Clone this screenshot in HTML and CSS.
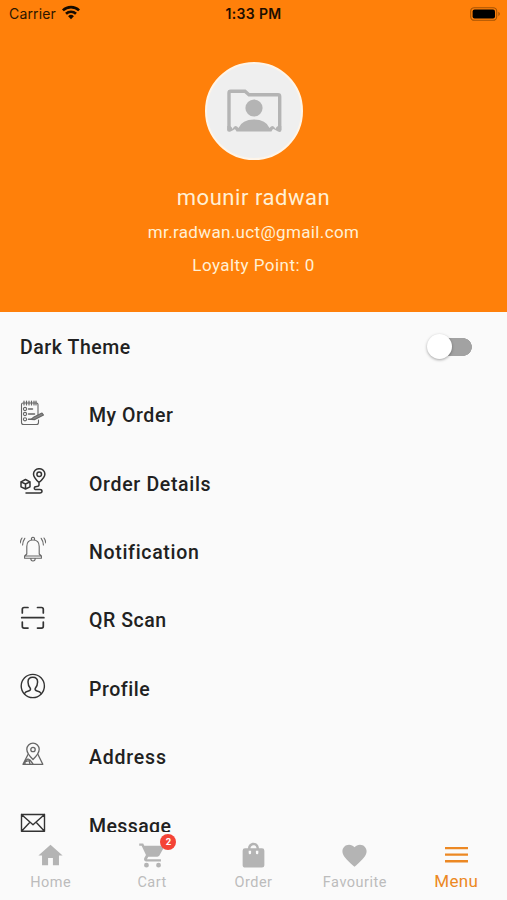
FILE: index.html
```html
<!DOCTYPE html>
<html lang="en">
<head>
<meta charset="utf-8">
<title>Menu</title>
<link rel="stylesheet" href="styles.css">
</head>
<body>
<div class="screen">
  <header class="hero">
    <div class="status">
      <div class="carrier"><span>Carrier</span>
        <svg width="20" height="15" viewBox="0 0 20 15" fill="none" stroke="#160b00" stroke-width="2.6"><path d="M1.9 5.4a11.6 11.6 0 0 1 16.2 0M5 8.8a7.2 7.2 0 0 1 10 0"/><path d="M7.1 11.2a4.2 4.2 0 0 1 5.8 0L10 14.2z" fill="#160b00" stroke="none"/></svg>
      </div>
      <div class="time">1:33 PM</div>
      <div class="battery">
        <svg width="31" height="14" viewBox="0 0 31 14"><rect x=".7" y=".7" width="26" height="12.6" rx="3.6" fill="none" stroke="#a65305" stroke-width="1.1"/><rect x="2.6" y="2.5" width="22.4" height="9" rx="2" fill="#000"/><path d="M28.4 4.8q3 2.2 0 4.4z" fill="#a65305"/></svg>
      </div>
    </div>
    <div class="avatar">
      <svg width="56" height="44" viewBox="0 0 56 44"><path d="M3 41V4q0-1.7 1.7-1.7H19l4 3.4h29q1.7 0 1.7 1.7V41" fill="none" stroke="#b4b4b4" stroke-width="3.4"/><circle cx="28" cy="19" r="8.6" fill="#b4b4b4"/><path d="M1.3 37Q5 36 6.500 40Q9 34.500 12.500 39Q16 30.500 28 30.500T43.500 39Q47 34.500 49.500 40Q51 36 55.300 37V42Q54 43.500 52 42.500L48.500 40.500Q47 39 45.500 42.500H10.500Q9 39 7.500 41L4 42.800Q2 43 1.300 42z" fill="#b4b4b4"/></svg>
    </div>
    <div class="name">mounir radwan</div>
    <div class="email">mr.radwan.uct@gmail.com</div>
    <div class="points">Loyalty Point: 0</div>
  </header>
  <main class="list">
    <div class="row theme"><span class="label t-dark">Dark Theme</span><span class="switch"><span class="knob"></span></span></div>
    <div class="row"><svg class="icon thin" viewBox="0 0 26 26"><path d="M18 17.500V4.500Q18 3 16.500 3H3Q1.500 3 1.500 4.500V22.500Q1.500 24.500 3.500 24.500H16.500Q18.500 24.500 18.500 22.500V20"/><path d="M4 1v4M6.500 1v4M9 1v4M11.500 1v4M14 1v4M16 1v4" stroke-width="1.200"/><circle cx="5" cy="9" r="1.600"/><circle cx="5" cy="14" r="1.600"/><circle cx="5" cy="19.300" r="1.600"/><path d="M8.500 9h4M8.500 14h6M8.500 19.300h3" stroke-width="1.500"/><path d="M11 19.500l2.500-2.200 8.500-4.200 1.500 1.900-8.700 4.600z" fill="#888"/></svg><span class="label t-my">My Order</span></div>
    <div class="row"><svg class="icon dark" viewBox="0 0 26 26"><path d="M19 14.500Q13.500 9.500 13.500 6a5.700 5.300 0 0 1 11.400 0Q24.900 9.500 19 14.500v2.300q0 1.700-2.200 1.700-2.500 0-2.500 1.700t2.500 1.300h3q2.200 0 2.200 1.700t-2.200 1.700H6"/><circle cx="19.200" cy="6.300" r="2.300"/><path d="M5.500 11.500l4.500 2.300v5L5.500 21 1 18.800v-5zM1 13.800l4.500 2.200 4.500-2.200M5.500 16v5"/></svg><span class="label t-details">Order Details</span></div>
    <div class="row"><svg class="icon thin" viewBox="0 0 26 26"><path d="M6.800 18V10.500Q6.800 4 13 4t6.200 6.500V18l2.200 2v2.300H4.600V20zM4.600 20h16.800M11.300 4q0-2.800 1.700-2.800T14.700 4M10.800 22.500q0 2.500 2.200 2.500t2.200-2.500"/><path d="M4.800 2.300Q2.800 5 2.600 9M2 2Q.5 4 .2 7M21.200 2.300q2 2.700 2.200 6.700M24 2q1.500 2 1.800 5"/></svg><span class="label t-notif">Notification</span></div>
    <div class="row"><svg class="icon dark" viewBox="0 0 26 26"><path d="M2.300 8V4.300Q2.300 2.500 4.100 2.500H8M17.500 2.500h4q1.800 0 1.800 1.800V8M2.300 17v4.300q0 1.800 1.800 1.800H8M17.500 23.100h4q1.800 0 1.800-1.800V17M1.700 12.700h22.200" stroke-width="1.700"/></svg><span class="label t-qr">QR Scan</span></div>
    <div class="row"><svg class="icon dark" viewBox="0 0 26 26"><circle cx="12.800" cy="13" r="11.600" stroke-width="1.400"/><path d="M4.500 20.500q1-2 4-2.600 2.500-.5 1.900-2.400Q8 12.700 8 9q0-4.800 4.800-4.800T17.600 9q0 3.700-2.400 6.500-.6 1.900 1.900 2.400 3 .6 4 2.600"/></svg><span class="label t-profile">Profile</span></div>
    <div class="row"><svg class="icon thin" viewBox="0 0 26 26"><path d="M13 17.500Q6.800 11.500 6.800 7.300a6.200 6.200 0 0 1 12.400 0Q19.200 11.500 13 17.500z" stroke-width="1.300"/><circle cx="13" cy="7.500" r="2.200" stroke-width="1.300"/><path d="M8 12.500L3 22.300h19.800L18 12.500M5 19l3-2 2 1 3 4M5 22v-2l4-1.500 1 3.500" stroke-width="1.300"/></svg><span class="label t-address">Address</span></div>
    <div class="row"><svg class="icon dark" viewBox="0 0 26 26"><path d="M1.500 4.500h23v16.800h-23zM1.500 4.500L13 14.700 24.500 4.500M1.500 21.300l7.700-8.300M24.500 21.300L16.800 13" stroke-width="1.400"/></svg><span class="label t-message">Message</span></div>
  </main>
  <nav class="tabs">
    <div class="tab"><svg viewBox="0 0 24 24"><path d="M10 20v-6h4v6h5v-8h3L12 3 2 12h3v8z"/></svg><span>Home</span></div>
    <div class="tab"><svg viewBox="0 0 24 24"><path d="M7 18a2 2 0 1 0 0 4 2 2 0 0 0 0-4zM1 2v2h2l3.600 7.600-1.400 2.400c-.7 1.300.3 3 1.800 3h12v-2H7.400l1.100-2h7.500c.7 0 1.400-.4 1.700-1l3.600-6.500c.4-.7-.1-1.500-.8-1.500H5.200l-.9-2H1zm16 16a2 2 0 1 0 0 4 2 2 0 0 0 0-4z"/></svg><b class="badge">2</b><span>Cart</span></div>
    <div class="tab"><svg viewBox="0 0 24 24"><path fill-rule="evenodd" d="M19 6h-2.500C16.500 3.500 14.500 1.500 12 1.500S7.500 3.500 7.500 6H5a2 2 0 0 0-2 2v12c0 1.100.9 2 2 2h14a2 2 0 0 0 2-2V8a2 2 0 0 0-2-2zm-9 4a1 1 0 0 1-2 0V8h2zm2-6.500c1.400 0 2.500 1.100 2.500 2.500h-5c0-1.400 1.100-2.500 2.500-2.500zM16 10a1 1 0 0 1-2 0V8h2z"/></svg><span>Order</span></div>
    <div class="tab"><svg viewBox="0 0 24 24"><path d="M12 21.400l-1.500-1.300C5.400 15.400 2 12.300 2 8.500 2 5.400 4.400 3 7.500 3c1.700 0 3.400.8 4.500 2.100C13.100 3.800 14.800 3 16.500 3 19.600 3 22 5.400 22 8.500c0 3.800-3.400 6.900-8.500 11.500z"/></svg><span>Favourite</span></div>
    <div class="tab active"><svg viewBox="0 0 24 24"><path d="M2.500 5h19v1.900h-19zm0 5.400h19v1.900h-19zm0 5.400h19v1.900h-19z"/></svg><span>Menu</span></div>
  </nav>
</div>
</body>
</html>
```
FILE: styles.css
```css
* { box-sizing: border-box; }
body { margin: 0; background: #fafafa; font-family: Roboto, "Open Sans", sans-serif; }
.screen { width: 507px; height: 900px; display: flex; flex-direction: column; overflow: hidden; }
.hero { height: 312px; flex: none; background: #ff800a; color: #fff0d5; display: flex; flex-direction: column; align-items: center; }
.status { width: 100%; height: 28px; padding: 0 6px 0 9px; display: grid; grid-template-columns: 1fr auto 1fr; align-items: center; color: #2b1600; font: 14px/28px Inter, sans-serif; }
.carrier { display: flex; align-items: center; gap: 5px; letter-spacing: .15px; }
.carrier svg { margin-top: -3px; }
.time { color: #1d0e00; font-weight: 600; font-size: 14px; letter-spacing: .35px; margin-left: -3px; }
.battery { display: flex; justify-content: flex-end; }
.avatar { width: 98px; height: 98px; margin-top: 34px; border: 2px solid #fff5e8; border-radius: 50%; background: #efefef; display: flex; align-items: center; justify-content: center; flex: none; }
.name { margin-top: 23px; font-size: 22px; line-height: 30px; letter-spacing: .55px; }
.email { margin-top: 7px; font-size: 17px; line-height: 24px; letter-spacing: .35px; }
.points { margin-top: 9px; font-size: 17px; line-height: 24px; letter-spacing: .45px; }
.list { height: 520px; overflow: hidden; flex: none; }
.row { height: 68.4px; padding-left: 20px; display: flex; align-items: center; }
.row.theme { height: 69px; padding: 0 35px 0 20px; justify-content: space-between; }
.icon { width: 26px; height: 26px; margin: -5px 43px 0 0; flex: none; fill: none; stroke-linecap: round; stroke-linejoin: round; }
.thin { stroke: #666; stroke-width: 1.1; }
.dark { stroke: #333; stroke-width: 1.5; }
.label { font-size: 19.5px; line-height: 24px; padding-top: 2px; font-weight: 500; color: #212121; white-space: nowrap; letter-spacing: .55px; }
.t-details, .t-notif { letter-spacing: .68px; }
.t-address { letter-spacing: .8px; }
.t-message { letter-spacing: .4px; }
.switch { width: 45px; height: 26px; display: flex; align-items: center; background: linear-gradient(#a2a2a2, #a2a2a2) 12px 4px / 24px 18px no-repeat, radial-gradient(circle at 36px 13px, #a2a2a2 8.6px, transparent 9.2px); }
.knob { width: 25px; height: 25px; border-radius: 50%; background: #fff; box-shadow: 0 1px 3px rgba(0,0,0,.35); }
.tabs { height: 68px; flex: none; display: grid; grid-template-columns: repeat(5, 1fr); background: #fafafa; }
.tab { position: relative; display: flex; flex-direction: column; align-items: center; padding-top: 9px; color: #bcbcbc; font-size: 14.5px; line-height: 20px; letter-spacing: .5px; }
.tab svg { width: 29px; height: 29px; fill: #b4b4b4; margin-bottom: 3px; }
.badge { position: absolute; left: 59px; top: 2px; width: 16px; height: 16px; border-radius: 50%; background: #f44336; color: #fff; font-size: 9.5px; line-height: 16px; text-align: center; letter-spacing: 0; }
.tab.active { color: #ec8823; font-size: 17px; letter-spacing: .35px; }
.tab.active svg { fill: #ec8823; margin-bottom: 1px; }
```
